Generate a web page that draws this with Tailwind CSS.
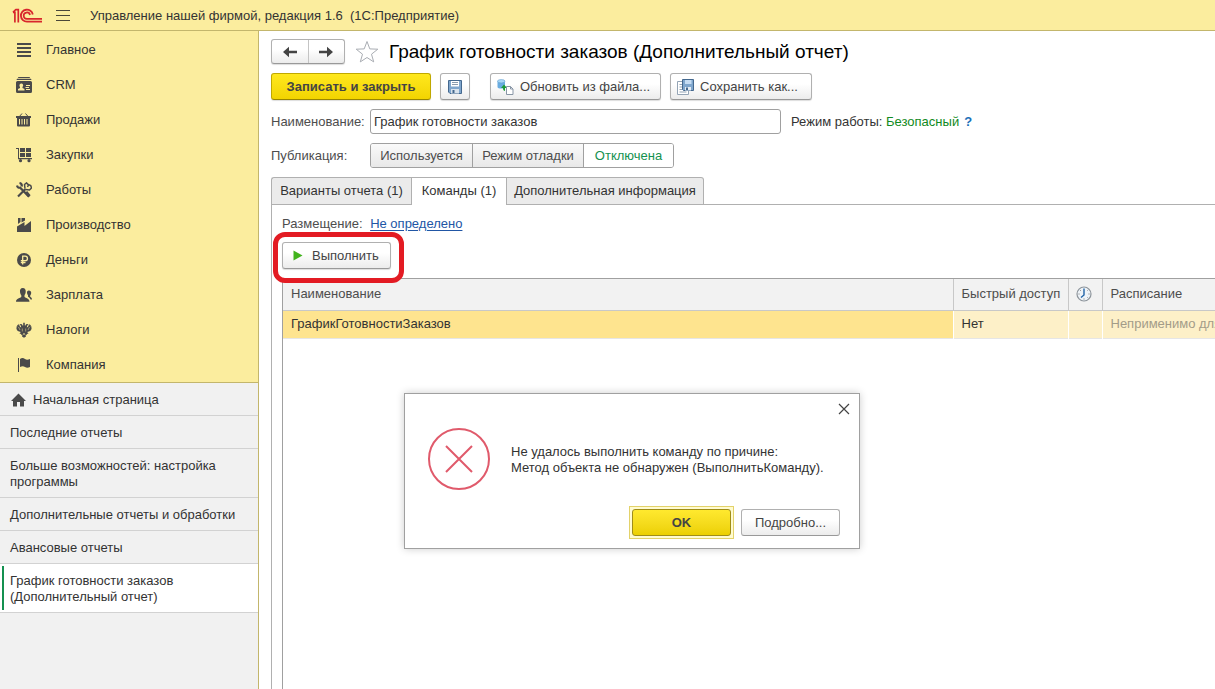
<!DOCTYPE html>
<html lang="ru">
<head>
<meta charset="utf-8">
<meta name="viewport" content="width=device-width, initial-scale=1">
<title>График готовности заказов (Дополнительный отчет)</title>
<script src="https://cdn.jsdelivr.net/npm/@tailwindcss/browser@4"></script>
</head>
<body class="flex h-screen flex-col overflow-hidden bg-white font-['Liberation_Sans',Arial,sans-serif] text-[13px] leading-4 text-[#333333]">
<header class="flex h-[31px] shrink-0 items-center border-b border-[#c3b66c] bg-[#fbed9e] pt-px pl-3">
  <svg class="h-4 w-[31px]" viewBox="0 0 31 16" fill="none" stroke="#d8262c" aria-label="1C" role="img">
    <path d="M1 4.300h1.900v10.200M3.500 1.700h2.800v12.800M1 4.300 3.800 1.500" stroke-width="1.700"/>
    <path d="M20.800 6.500A6 6 0 1 0 15 13.700H30" stroke-width="1.800"/>
    <path d="M18 7A3.200 3.200 0 1 0 15 10.900H30" stroke-width="1.700"/>
  </svg>
  <button type="button" class="ml-3 flex h-6 w-4 items-center justify-center" aria-label="Меню">
    <svg class="h-3 w-4" viewBox="0 0 16 12" stroke="#4a4738"><path d="M1 .5h14M1 5.500h14M1 10.500h14"/></svg>
  </button>
  <h1 class="ml-[19px] whitespace-pre">Управление нашей фирмой, редакция 1.6  (1С:Предприятие)</h1>
</header>
<div class="flex min-h-0 flex-1">
  <aside class="flex w-[259px] shrink-0 flex-col border-r border-[#c3b66c] bg-[#f1f1f1]">
    <nav class="border-b border-[#c3b66c] bg-[#fbed9e] pt-px" aria-label="Разделы">
      <a href="#" class="flex h-[35px] items-center gap-[14px] pl-4"><svg class="size-4" viewBox="0 0 16 16" fill="#4a4a4a"><path d="M1 1h14v2H1zM1 5h14v2H1zM1 9h14v2H1zM1 13h14v2H1z"/></svg>Главное</a>
      <a href="#" class="flex h-[35px] items-center gap-[14px] pl-4"><svg class="size-4" viewBox="0 0 16 16" fill="#4a4a4a"><path d="M2.500 0h11l.7 1H1.800zM1 1.800h14l.5 1.200H.5z"/><path fill-rule="evenodd" d="M1.500 4h13A1.500 1.500 0 0 1 16 5.500v9a1.500 1.500 0 0 1-1.500 1.500h-13A1.500 1.500 0 0 1 0 14.500v-9A1.500 1.500 0 0 1 1.500 4zM5 6.500a1.700 2 0 0 0-1 3.500v1l-2 1v1.500h6.500V12l-2-1v-1A1.700 2 0 0 0 5 6.500zM10 8v1h4V8zM9.500 10v1H13v-1zM10 12v1h4v-1z"/></svg>CRM</a>
      <a href="#" class="flex h-[35px] items-center gap-[14px] pl-4"><svg class="size-4" viewBox="0 0 16 16" fill="#4a4a4a"><path d="m3 5 3-3.500M12.500 5l-3-3.500" stroke="#4a4a4a" stroke-width="1"/><path fill-rule="evenodd" d="M0 4h15v2h-1v7.500a1 1 0 0 1-1 1H2a1 1 0 0 1-1-1V6H0zM3 7v5.500h1V7zm2.500 0v5.500h1V7zM8 7v5.500h1V7zm2.500 0v5.500h1V7z"/></svg>Продажи</a>
      <a href="#" class="flex h-[35px] items-center gap-[14px] pl-4"><svg class="size-4" viewBox="0 0 16 16" fill="#4a4a4a"><path d="M0 1h3v10h13v1.300H2V2H0zM4 1h5v4H4zM10 1h5v4h-5zM4 6h5v4H4zM10 6h5v4h-5z"/><circle cx="4.500" cy="13.700" r="1.600"/><circle cx="13" cy="13.700" r="1.600"/></svg>Закупки</a>
      <a href="#" class="flex h-[35px] items-center gap-[14px] pl-4"><svg class="size-4" viewBox="0 0 16 16" fill="none" stroke="#4a4a4a"><path d="M1 3.500c.3 1.700 1.500 2.500 3.200 2.200L13 14.800M5.700 4.500C6 2.800 5 1.300 3.500 1" stroke-width="2.200"/><path d="m10 10 3.500 4.200" stroke-width="3"/><path d="M9.500 7 2 14.500" stroke-width="2.200"/><path d="M9 6.500 8.500 2.500 10.500.9l2 2.100-1 2M9.500 7.500l4 .5 2-2-.8-2.500-2.500-1" stroke-width="1.500"/></svg>Работы</a>
      <a href="#" class="flex h-[35px] items-center gap-[14px] pl-4"><svg class="size-4" viewBox="0 0 16 16" fill="#4a4a4a"><path d="M1 15V9.500L8.500 5v4L15 4v11zM2 1h2.500v4L2 7zM5.500 1H9v2.500L5.500 5.500z"/></svg>Производство</a>
      <a href="#" class="flex h-[35px] items-center gap-[14px] pl-4"><svg class="size-4" viewBox="0 0 16 16"><circle cx="8" cy="8" r="7" fill="#4a4a4a"/><path d="M6.700 12.500V4.200h2.500a2.200 2.200 0 0 1 0 4.500H4.800M4.800 10.500h4.700" fill="none" stroke="#fbed9e" stroke-width="1.300"/></svg>Деньги</a>
      <a href="#" class="flex h-[35px] items-center gap-[14px] pl-4"><svg class="size-4" viewBox="0 0 16 16" fill="#4a4a4a"><path d="M6.800 1C4.500 1 3.700 2.700 4 5c.2 1.700.8 2.500 1.300 3.200V10C4.500 11 0 11.500 0 14.700h13.500c0-3.200-4-3.700-5-4.700V8.200C9 7.500 9.500 6.500 9.700 5c.3-2.300-.7-4-2.900-4z"/><path d="M12.800 3.500c-1.300 0-2 1-1.800 2.500.1 1 .5 1.700 1 2.200v1.600c1.300.8 2.200 1.500 2.500 2.700H16c0-1.500-.8-2-1.800-2.700V8.500c.5-.5.900-1.500 1-2.500.1-1.500-.8-2.500-2.400-2.500z"/></svg>Зарплата</a>
      <a href="#" class="flex h-[35px] items-center gap-[14px] pl-4"><svg class="size-4" viewBox="0 0 16 16" fill="#4a4a4a"><path d="M7.200.8h1.600v2.700h.7l.5-1.200L11.500 2l1 .8-1.300.7-.4 2 1.200-.7L13.300 1.800l.5 1.500 1-.6-.1 1.900.9-.2-.3 2 .6.200L14.300 9l-3 1 1.200 2-1.500-.2-.5 1.500-1-.8.5 2L8 15.800 6 14.500l.5-2-1 .8-.5-1.500-1.500.2 1.200-2-3-1L.1 6.600l.6-.2-.3-2 .9.200-.1-1.900 1 .6.500-1.500L4 4.800l1.200.7-.4-2-1.300-.7 1-.8 1.500.3.500 1.200h.7z"/><path d="M6.300 6.500v3M9.700 6.500v3M7.500 11v2M8.500 11v2M2.500 5l1.500 3M13.500 5 12 8" stroke="#fbed9e" stroke-width=".5"/></svg>Налоги</a>
      <a href="#" class="flex h-[35px] items-center gap-[14px] pl-4"><svg class="size-4" viewBox="0 0 16 16" fill="#4a4a4a"><path d="M2 1h1v14H2zM4 2c2-1.500 3.500-1 5 0s3 .8 5 0v8c-2 1-3.500 1-5 0s-3-1-5 0z"/></svg>Компания</a>
    </nav>
    <nav aria-label="Открытые окна">
      <a href="#" class="flex items-center gap-[7px] border-b border-[#d2d2d2] pt-[9px] pb-[7px] pl-[11px]"><svg class="-my-1 h-4 w-[15px]" viewBox="0 0 15 16" fill="#4a4a4a"><path d="M7.500 1.500 0 9h2v5.500h4V10h3v4.500h4V9h2z"/></svg>Начальная страница</a>
      <a href="#" class="block border-b border-[#d2d2d2] px-[10px] pt-[9px] pb-[7px]">Последние отчеты</a>
      <a href="#" class="block border-b border-[#d2d2d2] px-[10px] pt-[9px] pb-[7px]">Больше возможностей: настройка программы</a>
      <a href="#" class="block border-b border-[#d2d2d2] px-[10px] pt-[9px] pb-[7px]">Дополнительные отчеты и обработки</a>
      <a href="#" class="block border-b border-[#d2d2d2] px-[10px] pt-[9px] pb-[7px]">Авансовые отчеты</a>
      <a href="#" aria-current="page" class="flex border-b border-[#d2d2d2] bg-white py-[2px] pl-[2px]"><span class="w-[2px] bg-[#149150]"></span><span class="px-[6px] pt-[7px] pb-[5px]">График готовности заказов<br>(Дополнительный отчет)</span></a>
    </nav>
  </aside>

  <main class="flex min-w-0 flex-1 flex-col pt-2 pl-3">
    <div class="flex h-[25px] items-center">
      <div class="flex h-[25px] w-[74px] rounded-[3px] border border-[#b0b0b0] border-b-[#999999] bg-linear-to-b from-white from-40% to-[#ececec] shadow-[0_1px_1px_#dddddd]">
        <button type="button" class="flex flex-1 items-center justify-center border-r border-[#c4c4c4]" aria-label="Назад"><svg class="h-3 w-4" viewBox="0 0 16 12" fill="#444444"><path d="M1 6 7 .8v3.900h8v2.600H7v3.900z"/></svg></button>
        <button type="button" class="flex flex-1 items-center justify-center" aria-label="Вперед"><svg class="h-3 w-4" viewBox="0 0 16 12" fill="#444444"><path d="M15 6 9 .8v3.900H1v2.600h8v3.900z"/></svg></button>
      </div>
      <button type="button" class="ml-[10px]" aria-label="В избранное"><svg class="size-6" viewBox="0 0 24 24" fill="#ffffff" stroke="#a9adb3"><path d="m12 1.500 2.800 7.400 8 .3-6.300 5 2.200 7.700L12 17.500l-6.700 4.400 2.200-7.700-6.300-5 8-.3z"/></svg></button>
      <h2 class="ml-[10px] text-[19px] leading-6 text-black">График готовности заказов (Дополнительный отчет)</h2>
    </div>

    <div class="mt-[9px] flex h-[27px] text-[#444444]">
      <button type="button" class="w-40 rounded-[3px] border border-[#c0a800] border-b-[#998600] bg-linear-to-b from-[#ffe81c] to-[#f2d400] font-bold shadow-[0_1px_1px_#dddddd]">Записать и закрыть</button>
      <button type="button" class="ml-[9px] flex w-[30px] items-center justify-center rounded-[3px] border border-[#b0b0b0] border-b-[#999999] bg-linear-to-b from-white from-40% to-[#ececec] shadow-[0_1px_1px_#dddddd]" aria-label="Записать"><svg class="size-4" viewBox="0 0 16 16"><path d="M1.500 1.500h13v13H3l-1.500-1.500z" fill="#7fa6cd" stroke="#44688e"/><path d="M4 2h8v5.500H4z" fill="#ffffff"/><path d="M5 3.500h6M5 5.500h6" stroke="#8a9caf"/><path d="M4 10h8v4.500H4z" fill="#d9e3ed"/><path d="M5.500 11h2v3h-2z" fill="#44688e"/></svg></button>
      <button type="button" class="ml-5 flex w-[171px] items-center gap-[6px] rounded-[3px] border border-[#b0b0b0] border-b-[#999999] bg-linear-to-b from-white from-40% to-[#ececec] pl-[6px] whitespace-nowrap shadow-[0_1px_1px_#dddddd]"><svg class="h-4 w-[17px]" viewBox="0 0 17 16"><path d="M.5 2v6c0 2 7.500 2 7.500 0V2z" fill="#69ace0"/><ellipse cx="4.250" cy="2.200" rx="3.750" ry="1.700" fill="#a9d8f7" stroke="#5797cb" stroke-width=".5"/><path d="M8.500 12C6.500 12 6 11 6 9H4l3-3.500L10 9H8v3z" fill="#1d9b3a"/><path d="M9.500 7.500h4l2.500 2.500v5.500H9.500z" fill="#ffffff" stroke="#8795a5"/><path d="M13.500 7.500V10H16" fill="none" stroke="#8795a5"/></svg>Обновить из файла...</button>
      <button type="button" class="ml-[9px] flex w-[142px] items-center gap-[6px] rounded-[3px] border border-[#b0b0b0] border-b-[#999999] bg-linear-to-b from-white from-40% to-[#ececec] pl-[6px] whitespace-nowrap shadow-[0_1px_1px_#dddddd]"><svg class="h-4 w-[17px]" viewBox="0 0 17 16"><path d="M.5 2.500h11v13H.5z" fill="#ffffff" stroke="#94a4b5"/><path d="M2.500 5.500h3M2.500 8h3M2.500 10.500h3M2.500 13h7" stroke="#94a4b5"/><path d="M5.500.5h11v11h-10l-1-1z" fill="#7fa6cd" stroke="#44688e"/><path d="M8 1h6.500v4H8z" fill="#c5dcf3"/><path d="M8 8h6v3.500H8z" fill="#e5edf5"/><path d="M9 8.500h2V11H9z" fill="#44688e"/></svg>Сохранить как...</button>
    </div>

    <div class="mt-[9px] flex h-[25px] items-center">
      <label for="name" class="w-[99px] shrink-0 text-[#4d4d4d]">Наименование:</label>
      <input id="name" type="text" value="График готовности заказов" class="h-[25px] w-[411px] rounded-[3px] border border-[#a0a0a0] bg-white px-[3px] text-[#333333]">
      <span class="ml-[10px]">Режим работы: <span class="text-[#118a22]">Безопасный</span></span>
      <a href="#" class="ml-[5px] font-bold text-[#1a70b8]" aria-label="Справка">?</a>
    </div>

    <div class="mt-[9px] flex h-[25px] items-center">
      <span id="pub" class="w-[99px] shrink-0 text-[#4d4d4d]">Публикация:</span>
      <div role="group" aria-labelledby="pub" class="flex h-[25px] w-[304px] overflow-hidden rounded-[3px] border border-[#a0a0a0] text-[#4d4d4d]">
        <button type="button" class="w-[102px] border-r border-[#a0a0a0] bg-linear-to-b from-[#fafafa] to-[#e8e8e8]">Используется</button>
        <button type="button" class="w-[111px] border-r border-[#a0a0a0] bg-linear-to-b from-[#fafafa] to-[#e8e8e8]">Режим отладки</button>
        <button type="button" aria-pressed="true" class="flex-1 bg-white text-[#149150]">Отключена</button>
      </div>
    </div>

    <div role="tablist" class="mt-[9px] flex h-7 shrink-0">
      <button type="button" role="tab" class="w-[140px] rounded-tl-[3px] border border-r-0 border-[#b0b0b0] bg-[#ebebeb]">Варианты отчета (1)</button>
      <button type="button" role="tab" aria-selected="true" class="w-[96px] border border-b-0 border-[#b0b0b0] bg-white pb-px">Команды (1)</button>
      <button type="button" role="tab" class="w-[197px] rounded-tr-[3px] border border-l-0 border-[#b0b0b0] bg-[#ebebeb]">Дополнительная информация</button>
      <span class="flex-1 border-b border-[#b0b0b0]"></span>
    </div>

    <section role="tabpanel" class="flex min-h-0 flex-1 flex-col border-l border-[#b0b0b0] pt-[11px] pl-[10px]">
      <p class="text-[#4d4d4d]">Размещение: <a href="#" class="ml-1 text-[#2156a5] underline underline-offset-2">Не определено</a></p>
      <div class="relative mt-[10px] self-start">
        <button type="button" class="flex h-[27px] w-[109px] items-center gap-[9px] rounded-[3px] border border-[#b0b0b0] border-b-[#999999] bg-linear-to-b from-white from-40% to-[#ececec] pl-[10px] text-[#444444] shadow-[0_1px_1px_#dddddd]"><svg class="h-[11px] w-[10px]" viewBox="0 0 10 11" fill="#41b31c"><path d="M.5.5 9.500 5.500l-9 5z"/></svg>Выполнить</button>
        <span class="pointer-events-none absolute -top-[10px] -right-[13px] -bottom-[14px] -left-[9px] rounded-[12px] border-[5px] border-[#e31b23]"></span>
      </div>
      <div class="mt-[9px] min-h-0 flex-1 overflow-hidden border-t border-l border-[#a0a0a0]">
        <table class="w-full table-fixed border-collapse text-left whitespace-nowrap">
          <colgroup><col><col class="w-[115px]"><col class="w-[34px]"><col class="w-[113px]"></colgroup>
          <thead>
            <tr class="h-[31px] border-b border-[#c8c8c8] bg-[#f2f2f2] text-[#4d4d4d]">
              <th scope="col" class="px-2 font-normal">Наименование</th>
              <th scope="col" class="border-l border-[#c8c8c8] px-2 font-normal">Быстрый доступ</th>
              <th scope="col" class="border-l border-[#c8c8c8] pr-[2px] font-normal" aria-label="Регламент"><svg class="mx-auto -mt-px size-4" viewBox="0 0 16 16"><circle cx="8" cy="8" r="7" fill="#eef3f8" stroke="#8d949b" stroke-width="1.200"/><path d="M8 2.500V9l-3 2.500" fill="none" stroke="#2264a8" stroke-width="1.400"/><path d="M2.500 8h1M12.500 8h1M8 12.500v1M11.500 4.500l.7-.7M4 4l.7.7M11.500 11.500l.7.7" stroke="#777777"/></svg></th>
              <th scope="col" class="border-l border-[#c8c8c8] px-2 font-normal">Расписание</th>
            </tr>
          </thead>
          <tbody>
            <tr class="h-7 border-b border-[#e6e6e6] bg-[#fdf0c8]">
              <td class="bg-[#fee48f] px-2">ГрафикГотовностиЗаказов</td>
              <td class="border-l border-white px-2">Нет</td>
              <td class="border-l border-white"></td>
              <td class="overflow-hidden border-l border-white pl-2 text-[#a39c88]">Неприменимо для</td>
            </tr>
          </tbody>
        </table>
      </div>
    </section>
  </main>
</div>

<div role="alertdialog" aria-labelledby="msg" class="absolute top-[393px] left-[404px] flex w-[456px] flex-col border border-[#a0a0a0] bg-white pb-[9px] shadow-[0_0_8px_rgba(0,0,0,0.2)]">
  <button type="button" class="mt-[9px] mr-[9px] self-end" aria-label="Закрыть"><svg class="size-3" viewBox="0 0 12 12" stroke="#444444" stroke-width="1.200"><path d="m1 1 10 10M11 1 1 11"/></svg></button>
  <div class="mt-[12px] flex items-center gap-5 pl-[22px]">
    <svg class="size-16 shrink-0" viewBox="0 0 64 64" fill="none" stroke="#e05a6b" stroke-width="2"><circle cx="32" cy="32" r="30"/><path d="m19 19 26 26M45 19 19 45"/></svg>
    <p id="msg" class="pt-[2px]">Не удалось выполнить команду по причине:<br>Метод объекта не обнаружен (ВыполнитьКоманду).</p>
  </div>
  <div class="mt-[15px] flex items-center justify-end gap-[7px] pr-[19px] text-[#444444]">
    <span class="flex border border-[#e3d26a] bg-[#fffbd0] p-[2px]"><button type="button" class="h-[27px] w-[99px] rounded-[3px] border border-[#a08d18] bg-linear-to-b from-[#ffe92e] to-[#ecd000] font-bold">OK</button></span>
    <button type="button" class="h-[27px] w-[99px] rounded-[3px] border border-[#b0b0b0] border-b-[#999999] bg-linear-to-b from-white from-40% to-[#ececec]">Подробно...</button>
  </div>
</div>
</body>
</html>
